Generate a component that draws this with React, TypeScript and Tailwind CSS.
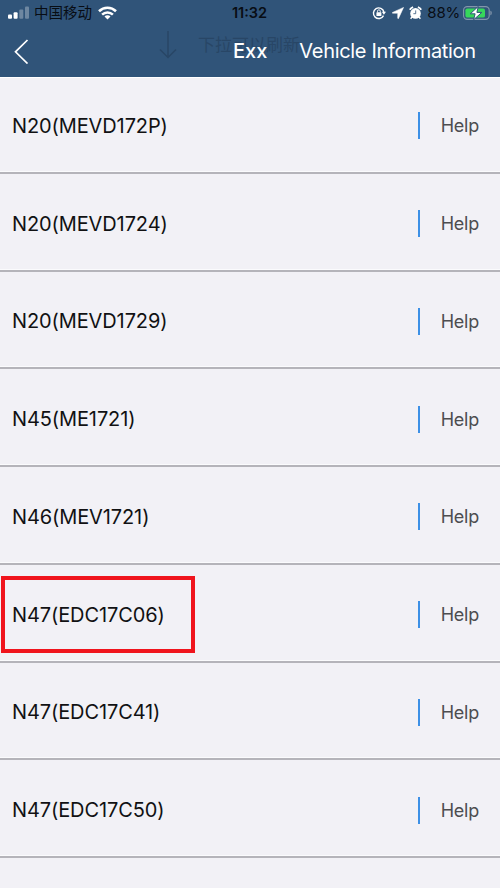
interface Engine {
    name: string;
    highlighted?: boolean;
}

const engines: Engine[] = [
    { name: "N20(MEVD172P)" },
    { name: "N20(MEVD1724)" },
    { name: "N20(MEVD1729)" },
    { name: "N45(ME1721)" },
    { name: "N46(MEV1721)" },
    { name: "N47(EDC17C06)", highlighted: true },
    { name: "N47(EDC17C41)" },
    { name: "N47(EDC17C50)" },
];

function SignalIcon() {
    return (
        <svg width="22" height="14" viewBox="0 0 22 14" fill="#fff">
            <rect x="0" y="8.4" width="4" height="4.4" rx="1" />
            <rect x="5.6" y="6.2" width="4" height="6.6" rx="1" />
            <rect x="11.3" y="3.4" width="4" height="9.4" rx="1" opacity="0.3" />
            <rect x="17" y="0.4" width="4" height="12.4" rx="1" opacity="0.3" />
        </svg>
    );
}

function WifiIcon() {
    return (
        <svg width="19" height="14" viewBox="0 0 19 14" fill="none" stroke="#fff">
            <path d="M1 5.2a12.2 12.2 0 0 1 17 0" strokeWidth="2.6" />
            <path d="M4.1 8.6a7.7 7.7 0 0 1 10.8 0" strokeWidth="2.5" />
            <path d="M9.5 13.6 6.5 10.6a4.2 4.2 0 0 1 6 0z" fill="#fff" stroke="none" />
        </svg>
    );
}

function RotationLockIcon() {
    return (
        <svg width="14" height="14" viewBox="0 0 14 14" fill="none" stroke="#fff">
            <path d="M11.5 9.6A5.3 5.3 0 1 1 11.9 6" strokeWidth="1.4" />
            <path d="M9.8 5.8h4.2l-2.1 3z" fill="#fff" stroke="none" />
            <rect x="4.4" y="6.2" width="5" height="3.8" rx="0.6" fill="#fff" stroke="none" />
            <path d="M5.5 6.4V5.2a1.4 1.4 0 0 1 2.8 0v1.2" strokeWidth="0.9" />
        </svg>
    );
}

function LocationIcon() {
    return (
        <svg width="12" height="12" viewBox="0 0 12 12" fill="#fff" stroke="#fff" strokeWidth="0.5">
            <path d="M11.6 0.4 0.5 5.4c-.4.2-.3.8.2.8h5v5c0 .5.6.6.8.2z" />
        </svg>
    );
}

function AlarmIcon() {
    return (
        <svg width="13" height="14" viewBox="0 0 13 14" fill="#fff">
            <path d="M0.8 3.8a6 6 0 0 1 3.3-2.7" fill="none" stroke="#fff" strokeWidth="1.9" />
            <path d="M12.2 3.8a6 6 0 0 0-3.3-2.7" fill="none" stroke="#fff" strokeWidth="1.9" />
            <circle cx="6.5" cy="7.4" r="5.3" />
            <path d="m3 11-1.4 1.8M10 11l1.4 1.8" stroke="#fff" strokeWidth="1.4" />
            <path d="M6.7 4.4v3.3H4.4" fill="none" stroke="#305479" strokeWidth="0.8" />
        </svg>
    );
}

function BatteryIcon() {
    return (
        <svg width="30" height="14" viewBox="0 0 30 14">
            <rect x="0.6" y="0.6" width="25.6" height="12.8" rx="3.6" fill="none" stroke="#8396ab" strokeWidth="1.1" />
            <path d="M27.4 4.8c1.8.5 1.8 4 0 4.5z" fill="#8396ab" />
            <rect x="2.4" y="2.4" width="19.6" height="9.2" rx="1.9" fill="#36d75b" />
            <path d="M15.3 0.4 7.3 7.8h4.8L10.6 13.8l8.2-7.4h-4.9z" fill="#fff" stroke="#305479" strokeWidth="1" />
        </svg>
    );
}

function StatusBar() {
    return (
        <div className="grid h-[25px] grid-cols-[1fr_auto_1fr] items-center text-[15px] text-[#080d14]">
            <div className="flex items-center pl-2">
                <SignalIcon />
                <span className="ml-1 text-[14.5px] leading-5">中国移动</span>
                <span className="ml-1.5">
                    <WifiIcon />
                </span>
            </div>
            <span className="pr-px text-[14.5px] font-semibold">11:32</span>
            <div className="flex items-center justify-end pr-[7px]">
                <RotationLockIcon />
                <span className="ml-1.5">
                    <LocationIcon />
                </span>
                <span className="ml-[5px]">
                    <AlarmIcon />
                </span>
                <span className="ml-[5px] pt-px tracking-[-0.2px]">88%</span>
                <span className="ml-[3px]">
                    <BatteryIcon />
                </span>
            </div>
        </div>
    );
}

function Header() {
    return (
        <header className="relative box-content h-[77px] border-b border-white bg-[#305479] bg-clip-padding">
            {/* pull-to-refresh hint that shows faintly through the bar */}
            <div className="absolute top-[31px] left-[159px] flex items-center gap-[21px] text-[#284666]">
                <svg width="18" height="28" viewBox="0 0 18 28" fill="none" stroke="currentColor" strokeWidth="1.5">
                    <path d="M9 0v26.5M1 18.5l8 8 8-8" />
                </svg>
                <span className="text-[17px] leading-7">下拉可以刷新</span>
            </div>
            <div className="relative">
                <StatusBar />
                <nav className="flex h-[52px] items-center pl-[14px] text-white">
                    <svg width="15" height="25" viewBox="0 0 15 25" fill="none" stroke="#fff" strokeWidth="1.7">
                        <path d="M13.5 1 1.5 12.8l12 11.7" />
                    </svg>
                    <h1 className="ml-[204px] text-[20px] font-medium">Exx</h1>
                    <span className="ml-[32px] text-[20px] tracking-[-0.32px] whitespace-nowrap">Vehicle Information</span>
                </nav>
            </div>
        </header>
    );
}

function EngineRow({ name, highlighted }: Engine) {
    return (
        <li className="relative flex h-[97.75px] items-center border-b-2 border-[#b5b4ba] pt-1 pr-[21px] pl-3 shadow-[inset_0_-1px_#fbfbfd]">
            <span className="text-[20px] tracking-[-0.11px] text-[#111113]">{name}</span>
            <span className="ml-auto h-[27px] w-[1.5px] bg-[#3d90e6]" />
            <button className="ml-[21px] text-[18px] tracking-[-0.25px] text-[#4d4d50]">Help</button>
            {highlighted && (
                <div className="absolute top-[11px] left-px h-[77px] w-[194px] border-[4.5px] border-[#f0141d]" />
            )}
        </li>
    );
}

export default function App() {
    return (
        <div className="h-[888px] w-[500px] overflow-hidden bg-[#f2f1f6] font-[Inter,'Noto_Sans_CJK_SC',sans-serif]">
            <Header />
            <ul className="-mt-0.5">
                {engines.map((engine) => (
                    <EngineRow key={engine.name} {...engine} />
                ))}
            </ul>
        </div>
    );
}
